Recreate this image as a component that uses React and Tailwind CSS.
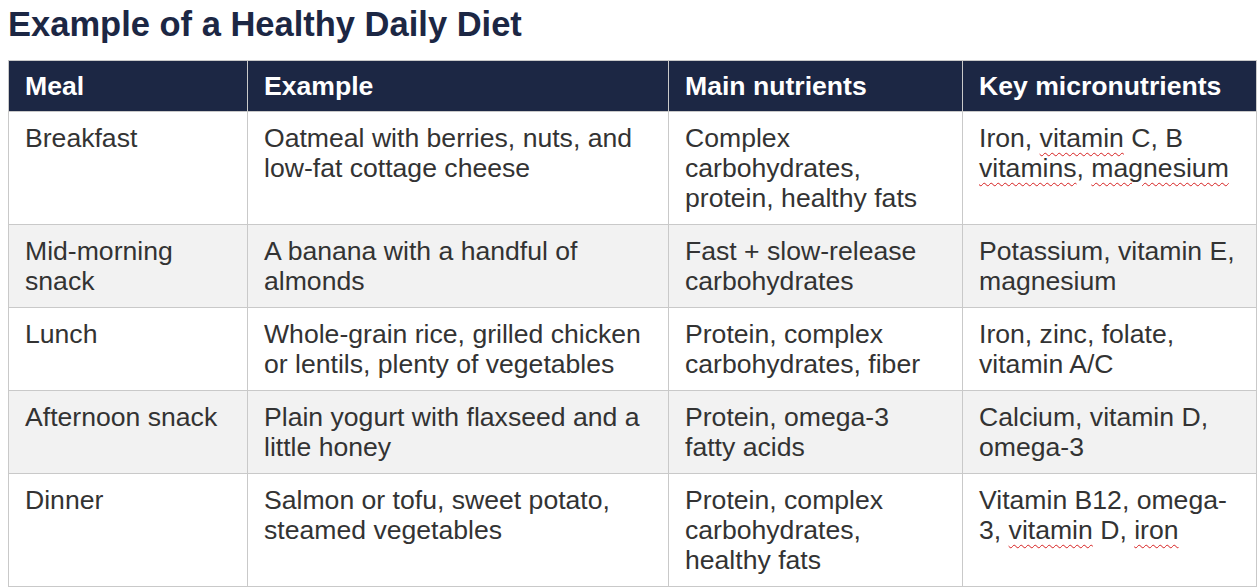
import React from 'react';

const rows = [
  {
    meal: 'Breakfast',
    example: 'Oatmeal with berries, nuts, and low-fat cottage cheese',
    main: 'Complex carbohydrates, protein, healthy fats',
    micro: ['Iron, ', { w: 'vitamin' }, ' C, B ', { w: 'vitamins' }, ', ', { w: 'magnesium' }],
  },
  {
    meal: 'Mid-morning snack',
    example: 'A banana with a handful of almonds',
    main: 'Fast + slow-release carbohydrates',
    micro: ['Potassium, vitamin E, magnesium'],
  },
  {
    meal: 'Lunch',
    example: 'Whole-grain rice, grilled chicken or lentils, plenty of vegetables',
    main: 'Protein, complex carbohydrates, fiber',
    micro: ['Iron, zinc, folate, vitamin A/C'],
  },
  {
    meal: 'Afternoon snack',
    example: 'Plain yogurt with flaxseed and a little honey',
    main: 'Protein, omega-3 fatty acids',
    micro: ['Calcium, vitamin D, omega-3'],
  },
  {
    meal: 'Dinner',
    example: 'Salmon or tofu, sweet potato, steamed vegetables',
    main: 'Protein, complex carbohydrates, healthy fats',
    micro: ['Vitamin B12, omega-3, ', { w: 'vitamin' }, ' D, ', { w: 'iron' }],
  },
];

// spellchecker squiggle like in the office screenshot
function Micro({ parts }) {
  return parts.map((p, i) =>
    typeof p === 'string' ? (
      <span key={i}>{p}</span>
    ) : (
      <span
        key={i}
        className="underline decoration-wavy decoration-[#d62020] decoration-1 underline-offset-[5px]"
      >
        {p.w}
      </span>
    )
  );
}

export default function App() {
  const cell = 'border border-[#c9c9c9] pl-4 pt-[11px] pb-[11px] align-top';
  const head = 'border border-[#c9c9c9] pl-4 py-[10px] text-left font-bold text-white';

  return (
    <div className="w-[1260px] h-[587px] bg-white overflow-hidden font-['Liberation_Sans',Arial,sans-serif]">
      <h1 className="pl-[8px] pt-[4px] text-[34.5px] leading-[40px] font-bold text-[#1c2744]">
        Example of a Healthy Daily Diet
      </h1>

      <table className="mt-[16px] ml-[8px] w-[1248px] table-fixed border-collapse text-[26.6px] leading-[30px] text-[#333333]">
        <colgroup>
          <col className="w-[239px]" />
          <col className="w-[421px]" />
          <col className="w-[294px]" />
          <col className="w-[294px]" />
        </colgroup>
        <thead>
          <tr className="bg-[#1c2744]">
            <th className={`${head} pr-4`}>Meal</th>
            <th className={`${head} pr-4`}>Example</th>
            <th className={`${head} pr-6`}>Main nutrients</th>
            <th className={`${head} pr-3`}>Key micronutrients</th>
          </tr>
        </thead>
        <tbody>
          {rows.map((r, i) => (
            <tr key={r.meal} className={i % 2 === 1 ? 'bg-[#f2f2f2]' : 'bg-white'}>
              <td className={`${cell} pr-4`}>{r.meal}</td>
              <td className={`${cell} pr-4`}>{r.example}</td>
              <td className={`${cell} pr-6`}>{r.main}</td>
              <td className={`${cell} pr-3`}>
                <Micro parts={r.micro} />
              </td>
            </tr>
          ))}
        </tbody>
      </table>
    </div>
  );
}
